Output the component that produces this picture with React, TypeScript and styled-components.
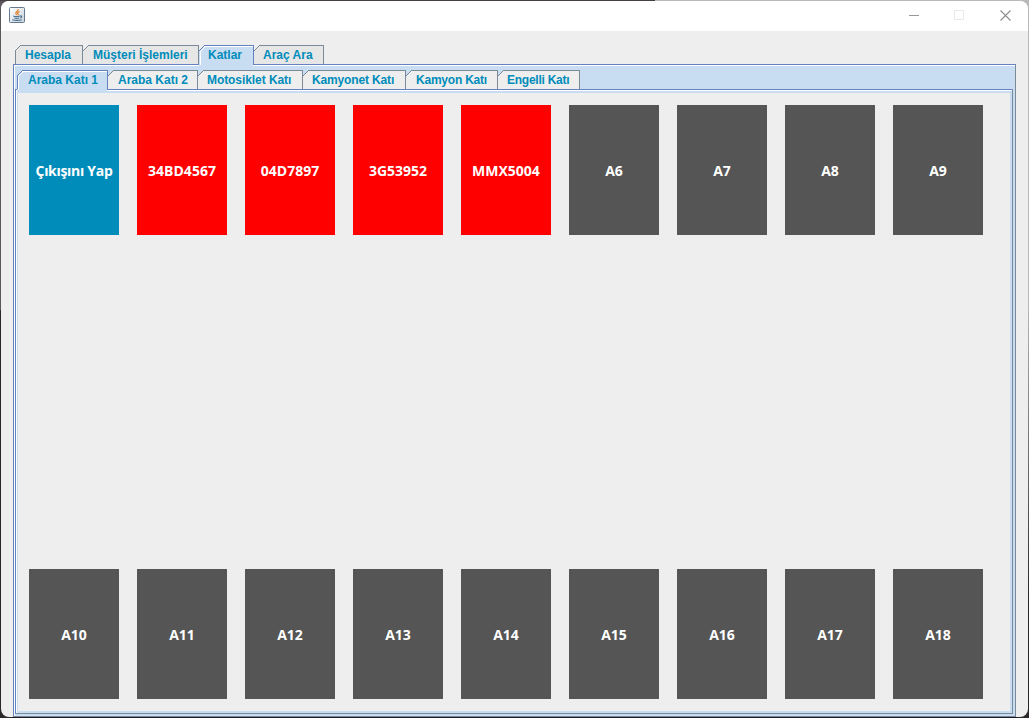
import React from 'react';
import styled, { createGlobalStyle, css } from 'styled-components';

const Global = createGlobalStyle`
  * { box-sizing: border-box; }
  html, body { margin: 0; background: #2b2729; overflow: hidden; }
`;

const Desktop = styled.div`
  width: 1029px;
  height: 718px;
  padding: 1px;
  background: linear-gradient(90deg, #453f42 655px, #b9b9b9 655px) 0 0 / 100% 1px no-repeat,
    linear-gradient(180deg, #5c575c 0 310px, #2b2729 310px) 0 0 / 12px 100% no-repeat,
    linear-gradient(180deg, #b9b9b9 0 300px, #2b2729 600px) 100% 0 / 12px 100% no-repeat,
    #1d1b1d;
`;

const Window = styled.main`
  display: flex;
  flex-direction: column;
  height: 716px;
  border-radius: 8px;
  overflow: hidden;
  background: #eeeeee;
  font-family: 'Liberation Sans', Arial, sans-serif;
`;

const TitleBar = styled.header`
  flex: none;
  display: flex;
  justify-content: space-between;
  height: 30px;
  padding: 6px 0 0 8px;
  background: #fff;
`;

const Controls = styled.div`
  display: flex;
  gap: 35px;
  padding: 3px 17px 0 0;
`;

const Body = styled.div`
  padding-top: 14px;
`;

const OuterTabsWrap = styled.div`
  padding-left: 12px;
`;

const Tabs = styled.nav`
  flex: none;
  display: flex;
  position: relative;
  height: 20px;
  margin-bottom: -1px;
  padding-left: 2px;
`;

const TabBox = styled.button<{ $w: number; $on?: boolean; $bg: string }>`
  display: flex;
  align-items: flex-start;
  position: relative;
  flex: none;
  width: ${p => p.$w}px;
  height: ${p => (p.$on ? 21 : 19)}px;
  padding: 0;
  border: solid ${p => (p.$on ? '#6382bf' : '#7a8a99')};
  border-width: 1px 1px 0 0;
  background: ${p => (p.$on ? '#c8ddf2' : p.$bg)};
  color: #008cba;
  ${p => p.$on && css`
    box-shadow: inset 0 1px #fff;
    z-index: 1;

    &::after {
      content: '';
      position: absolute;
      right: -1px;
      bottom: 0;
      width: 1px;
      height: 1px;
      background: #fff;
    }
  `}
`;

const TabText = styled.span<{ $start: number; $tracking: number }>`
  padding-left: ${p => p.$start}px;
  font: bold 12px/18px 'Liberation Sans', Arial, sans-serif;
  letter-spacing: ${p => p.$tracking}px;
  white-space: nowrap;
`;

const Corner = styled.svg`
  position: absolute;
  left: 0;
  top: -1px;
`;

const Outer = styled.section`
  display: flex;
  flex-direction: column;
  height: 653px;
  margin: 0 12px;
  border: 1px solid #6382bf;
  border-right-color: #7a8a99;
  border-bottom-color: #7a8a99;
  padding: 5px 2px 2px 1px;
  background: #c8ddf2;
  box-shadow: inset 1px 1px #fff;
`;

const Inner = styled.section`
  flex: 1;
  display: flex;
  border: 1px solid #6382bf;
  border-right-color: #7a8a99;
  border-bottom-color: #7a8a99;
  padding: 3px 2px 2px 2px;
  background: #c8ddf2;
  box-shadow: inset 1px 1px #fff;
`;

const Floor = styled.div`
  flex: 1;
  display: flex;
  flex-direction: column;
  justify-content: space-between;
  padding: 12px 0 12px 11px;
  background: #eeeeee;
`;

const SpotRow = styled.div`
  display: flex;
  gap: 18px;
`;

const Spot = styled.button<{ $color: string; $tracking?: number }>`
  width: 90px;
  height: 130px;
  padding: 1px 0 0;
  border: 0;
  background: ${p => p.$color};
  color: #fff;
  font: bold 14px/19px 'Open Sans', 'Noto Sans', sans-serif;
  letter-spacing: ${p => p.$tracking ?? 0}px;
  white-space: nowrap;
`;

interface TabItem {
  label: string;
  width: number;
  start: number;
  tracking?: number;
  active?: boolean;
}

function TabStrip({ items, inner }: { items: TabItem[]; inner?: boolean }) {
  const behind = inner ? '#c8ddf2' : '#eeeeee';
  return (
    <Tabs>
      {items.map(({ label, width, start, tracking = 0, active }, i) => {
        const stroke = active ? '#6382bf' : '#7a8a99';
        return (
          <TabBox key={label} $w={width} $on={active} $bg={inner ? '#eeeeee' : '#e6e6e6'}>
            <Corner width="7" height="21" shapeRendering="crispEdges">
              <path d="M0 0h6v1h-1v1h-1v1h-1v1h-1v1h-1v1h-1z" fill={behind} />
              <path d="M5 0h1v1h-1zM4 1h1v1h-1zM3 2h1v1h-1zM2 3h1v1h-1zM1 4h1v1h-1zM0 5h1v1h-1z" fill={stroke} />
              {i === 0 && <path d="M0 6h1v13h-1z" fill={stroke} />}
              {active && <path d="M6 1h1v1h-1zM5 2h1v1h-1zM4 3h1v1h-1zM3 4h1v1h-1zM2 5h1v1h-1zM1 6h1v14h-1z" fill="#fff" />}
            </Corner>
            <TabText $start={start} $tracking={tracking}>{label}</TabText>
          </TabBox>
        );
      })}
    </Tabs>
  );
}

const JavaIcon = () => (
  <svg width="16" height="16" viewBox="0 0 16 16" fill="none">
    <defs>
      <linearGradient id="tile" x2="1" y2="1">
        <stop stopColor="#fff" />
        <stop offset="1" stopColor="#c5d2dc" />
      </linearGradient>
    </defs>
    <rect x=".5" y=".5" width="15" height="15" rx="1" fill="url(#tile)" stroke="#65798a" />
    <path d="M9.2 2.2c.4 2-3.2 2.600-2.300 4.400l.8 1.300M10.700 4.500c-2.400.8-2.300 1.700-1.600 2.500.3.600 0 .9-.4 1.200" stroke="#e57a20" strokeWidth="1.2" />
    <path d="M4.200 9c1.800.7 5.300.5 6.700 0M11 9c2.500-.6 2 1.700.1 2M5.300 11c1.400.5 3.500.5 4.800 0M3.200 12.700c2.500 1 7.700.9 9.500 0" stroke="#4d7391" strokeWidth="1.1" />
  </svg>
);

const outerTabs: TabItem[] = [
  { label: 'Hesapla', width: 68, start: 10 },
  { label: 'Müşteri İşlemleri', width: 116, start: 10 },
  { label: 'Katlar', width: 55, start: 9, active: true },
  { label: 'Araç Ara', width: 70, start: 9 },
];
const innerTabs: TabItem[] = [
  { label: 'Araba Katı 1', width: 91, start: 11, active: true },
  { label: 'Araba Katı 2', width: 90, start: 10 },
  { label: 'Motosiklet Katı', width: 105, start: 9, tracking: -0.07 },
  { label: 'Kamyonet Katı', width: 103, start: 9, tracking: -0.15 },
  { label: 'Kamyon Katı', width: 92, start: 10, tracking: -0.22 },
  { label: 'Engelli Katı', width: 82, start: 9, tracking: -0.25 },
];
const top = ['Çıkışını Yap', '34BD4567', '04D7897', '3G53952', 'MMX5004', 'A6', 'A7', 'A8', 'A9'];
const bottom = ['A10', 'A11', 'A12', 'A13', 'A14', 'A15', 'A16', 'A17', 'A18'];
const topColor = (i: number) => (i === 0 ? '#008cba' : i < 5 ? '#ff0000' : '#555555');

export default function App() {
  return (
    <Desktop>
      <Global />
      <Window>
        <TitleBar>
          <JavaIcon />
          <Controls>
            <svg width="10" height="10" shapeRendering="crispEdges"><path d="M0 5h10v1H0z" fill="#999" /></svg>
            <svg width="10" height="10"><rect x=".5" y=".5" width="9" height="9" rx=".5" fill="none" stroke="#e8e8e8" /></svg>
            <svg width="12" height="11"><path d="M1.500.5l10 10M11.500.5l-10 10" stroke="#8c8c8c" strokeWidth="1.100" /></svg>
          </Controls>
        </TitleBar>
        <Body>
          <OuterTabsWrap><TabStrip items={outerTabs} /></OuterTabsWrap>
          <Outer>
            <TabStrip items={innerTabs} inner />
            <Inner>
              <Floor>
                <SpotRow>
                  {top.map((t, i) => (
                    <Spot key={t} $color={topColor(i)} $tracking={i === 0 ? -0.3 : 0}>{t}</Spot>
                  ))}
                </SpotRow>
                <SpotRow>{bottom.map(t => <Spot key={t} $color="#555555">{t}</Spot>)}</SpotRow>
              </Floor>
            </Inner>
          </Outer>
        </Body>
      </Window>
    </Desktop>
  );
}
